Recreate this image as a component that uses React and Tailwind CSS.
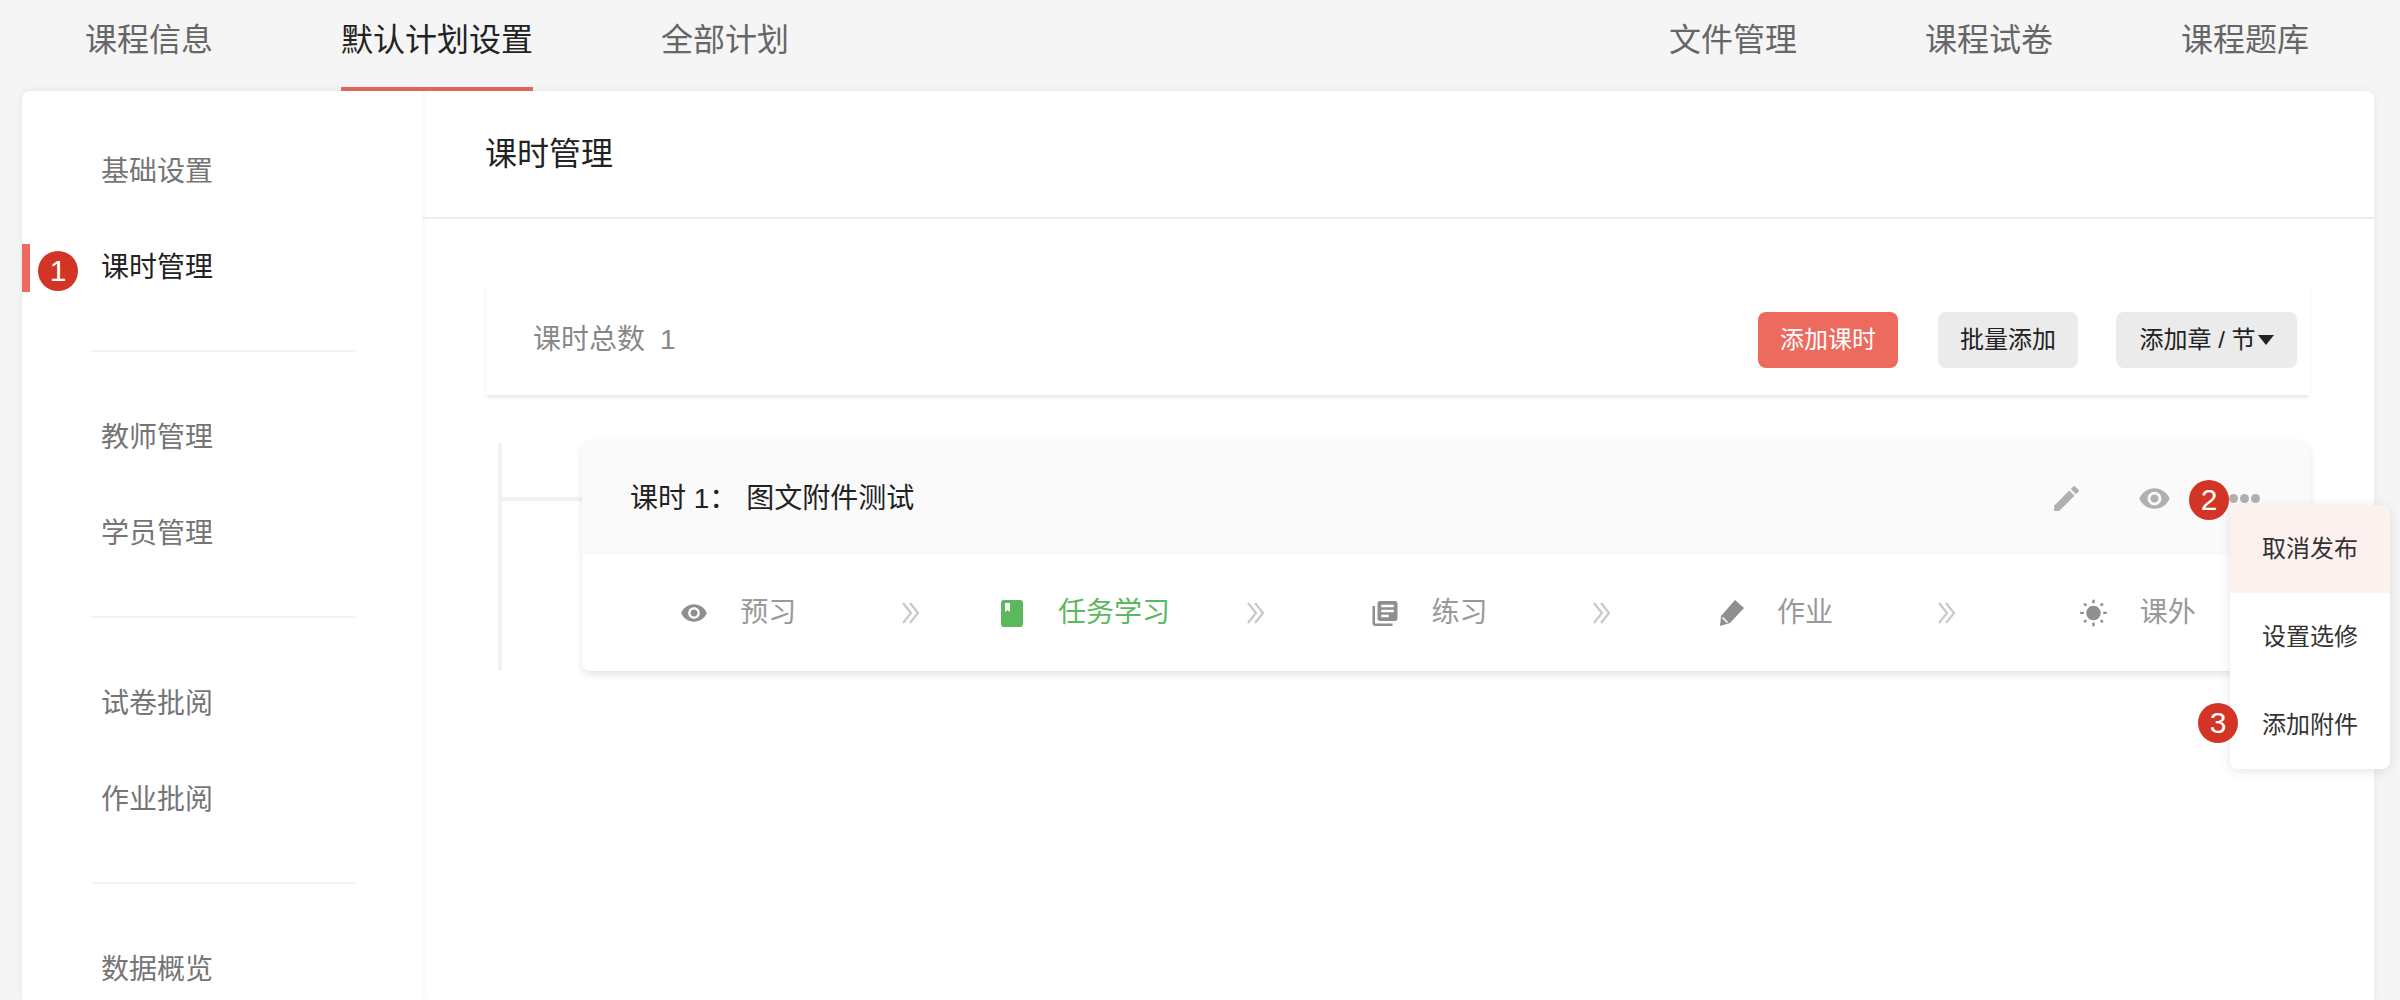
import { MdEdit, MdVisibility, MdLibraryBooks, MdWbSunny } from 'react-icons/md'

const FONT = "font-['Liberation_Sans','Noto_Sans_CJK_SC',sans-serif]"

const SIDE_GROUPS = [
  ['基础设置', '课时管理'],
  ['教师管理', '学员管理'],
  ['试卷批阅', '作业批阅'],
  ['数据概览'],
]

function Badge({ n, className = '' }) {
  return (
    <span className={`absolute w-[40px] h-[40px] rounded-full bg-[#d23526] text-white text-[30px] leading-[40px] text-center ${className}`}>
      {n}
    </span>
  )
}

function BookIcon() {
  return (
    <svg width="22" height="27" viewBox="0 0 22 27">
      <path d="M3 0h16a3 3 0 0 1 3 3v21a3 3 0 0 1-3 3H3a3 3 0 0 1-3-3V3a3 3 0 0 1 3-3z" fill="#5cb85c" />
      <path d="M4 3h5v9l-2.500-2L4 12z" fill="#fff" />
    </svg>
  )
}

function PencilIcon() {
  return (
    <svg width="25" height="26" viewBox="0 0 25 26">
      <path d="M16 0l9 8-14 15-10 3 1-10z" fill="#8f8f8f" />
      <path d="M3.500 17.500l5 5" stroke="#fff" strokeWidth="1.600" />
    </svg>
  )
}

function DoubleChevron() {
  return (
    <svg width="18" height="22" viewBox="0 0 18 22" fill="none" stroke="#c9c9c9" strokeWidth="2.200" className="shrink-0">
      <path d="M1 1l8 10-8 10" />
      <path d="M8 1l8 10-8 10" />
    </svg>
  )
}

function Step({ icon, label, active, last }) {
  return (
    <div className="flex-1 flex items-center">
      <div className={`flex-1 flex items-center justify-center ${last ? '' : 'pr-[8px]'}`}>
        <span className="w-[30px] flex items-center justify-center">{icon}</span>
        <span className={`ml-[31px] text-[28px] ${active ? 'text-[#5cb85c]' : 'text-[#999999]'}`}>{label}</span>
      </div>
      {!last && <DoubleChevron />}
      {!last && <span className="w-[8px]" />}
    </div>
  )
}

function Sidebar() {
  return (
    <aside className="w-[400px] shrink-0 pt-[33px] shadow-[2px_0_6px_rgba(0,0,0,0.04)]">
      {SIDE_GROUPS.map((group, i) => (
        <div key={i}>
          {i > 0 && <div className="h-[2px] bg-[#f3f3f3] ml-[69px] w-[264px] mt-[34px] mb-[38px]" />}
          {group.map(name => {
            const active = name === '课时管理'
            return (
              <div key={name} className="relative h-[96px] flex items-center pl-[79px]">
                {active && <span className="absolute left-0 top-[24px] w-[8px] h-[48px] bg-[#ec6a5e]" />}
                {active && <Badge n="1" className="left-[16px] top-[31px]" />}
                <span className={`text-[28px] ${active ? 'text-[#222222]' : 'text-[#757575]'}`}>{name}</span>
              </div>
            )
          })}
        </div>
      ))}
    </aside>
  )
}

function LessonCard() {
  return (
    <div className="flex-1 relative rounded-lg bg-white shadow-[0_4px_8px_-1px_rgba(0,0,0,0.12)]">
      {/* Title row */}
      <div className="h-[115px] pt-[2px] rounded-t-lg bg-[#fafafa] flex items-center pl-[48px] pr-[50px]">
        <span className="text-[28px] text-[#222222] whitespace-pre">课时 1：</span>
        <span className="text-[28px] text-[#222222] ml-[9px]">图文附件测试</span>
        <div className="ml-auto flex items-center">
          <MdEdit size={33} className="text-[#b0b0b0]" />
          <MdVisibility size={33} className="text-[#b0b0b0] ml-[55px]" />
          <div className="relative ml-[58px] flex gap-[2px]">
            <span className="w-[9px] h-[9px] rounded-full bg-[#b0b0b0]" />
            <span className="w-[9px] h-[9px] rounded-full bg-[#b0b0b0]" />
            <span className="w-[9px] h-[9px] rounded-full bg-[#b0b0b0]" />
            <Badge n="2" className="left-[-40px] top-[-14px]" />
          </div>
        </div>
      </div>

      {/* Steps */}
      <div className="h-[116px] flex items-center">
        <Step icon={<MdVisibility size={28} className="text-[#8f8f8f]" />} label="预习" />
        <Step icon={<BookIcon />} label="任务学习" active />
        <Step icon={<MdLibraryBooks size={33} className="text-[#8f8f8f]" />} label="练习" />
        <Step icon={<PencilIcon />} label="作业" />
        <Step icon={<MdWbSunny size={29} className="text-[#8f8f8f]" />} label="课外" last />
      </div>

      {/* Dropdown */}
      <div className="absolute top-[65px] right-[-80px] w-[160px] rounded-lg bg-white shadow-[0_2px_12px_rgba(0,0,0,0.1)] text-[24px] text-[#333333]">
        <div className="h-[88px] rounded-t-lg bg-[#fdf1f0] flex items-center justify-center">取消发布</div>
        <div className="h-[88px] flex items-center justify-center">设置选修</div>
        <div className="relative h-[88px] flex items-center justify-center">
          添加附件
          <Badge n="3" className="left-[-32px] top-[22px]" />
        </div>
      </div>
    </div>
  )
}

export default function App() {
  return (
    <div className={`w-[2400px] h-[1000px] overflow-hidden bg-[#f5f5f5] ${FONT}`}>
      {/* Top tabs */}
      <div className="h-[91px] flex justify-between pl-[85px] pr-[91px] text-[32px] text-[#666666]">
        <div className="flex gap-[128px]">
          <span className="pt-[16px]">课程信息</span>
          <span className="pt-[16px] h-[91px] border-b-4 border-[#e0675c] text-[#222222]">默认计划设置</span>
          <span className="pt-[16px]">全部计划</span>
        </div>
        <div className="flex gap-[128px]">
          <span className="pt-[16px]">文件管理</span>
          <span className="pt-[16px]">课程试卷</span>
          <span className="pt-[16px]">课程题库</span>
        </div>
      </div>

      {/* Card */}
      <div className="ml-[22px] w-[2352px] h-[909px] flex rounded-t-lg bg-white shadow-[0_0_8px_rgba(0,0,0,0.06)]">
        <Sidebar />

        <main className="flex-1">
          <div className="h-[126px] flex items-center pl-[63px] text-[32px] text-[#222222] border-b-2 border-[#ececec] box-content">
            课时管理
          </div>

          <div className="px-[64px] pt-[64px]">
            {/* Toolbar */}
            <div className="h-[112px] flex items-center pl-[47px] pr-[13px] pt-[2px] bg-white shadow-[0_3px_4px_-1px_rgba(0,0,0,0.12)]">
              <span className="text-[28px] text-[#888888]">课时总数</span>
              <span className="text-[28px] text-[#888888] ml-[15px]">1</span>
              <button className="ml-auto w-[140px] h-[56px] rounded-lg bg-[#ec6a5e] text-white text-[24px]">添加课时</button>
              <button className="ml-[40px] w-[140px] h-[56px] rounded-lg bg-[#ebebeb] text-[#222222] text-[24px]">批量添加</button>
              <button className="ml-[38px] w-[181px] h-[56px] rounded-lg bg-[#ebebeb] text-[#222222] text-[24px] flex items-center justify-center">
                添加章 / 节
                <svg width="16" height="10" viewBox="0 0 16 10" className="ml-[2px]"><path d="M0 0h16L8 10z" fill="#222222" /></svg>
              </button>
            </div>

            {/* Lesson tree */}
            <div className="mt-[45px] flex">
              <div className="ml-[12px] mt-[3px] w-[4px] h-[228px] bg-[#f2f2f2]" />
              <div className="mt-[57px] w-[80px] h-[4px] bg-[#f2f2f2]" />
              <LessonCard />
            </div>
          </div>
        </main>
      </div>
    </div>
  )
}
